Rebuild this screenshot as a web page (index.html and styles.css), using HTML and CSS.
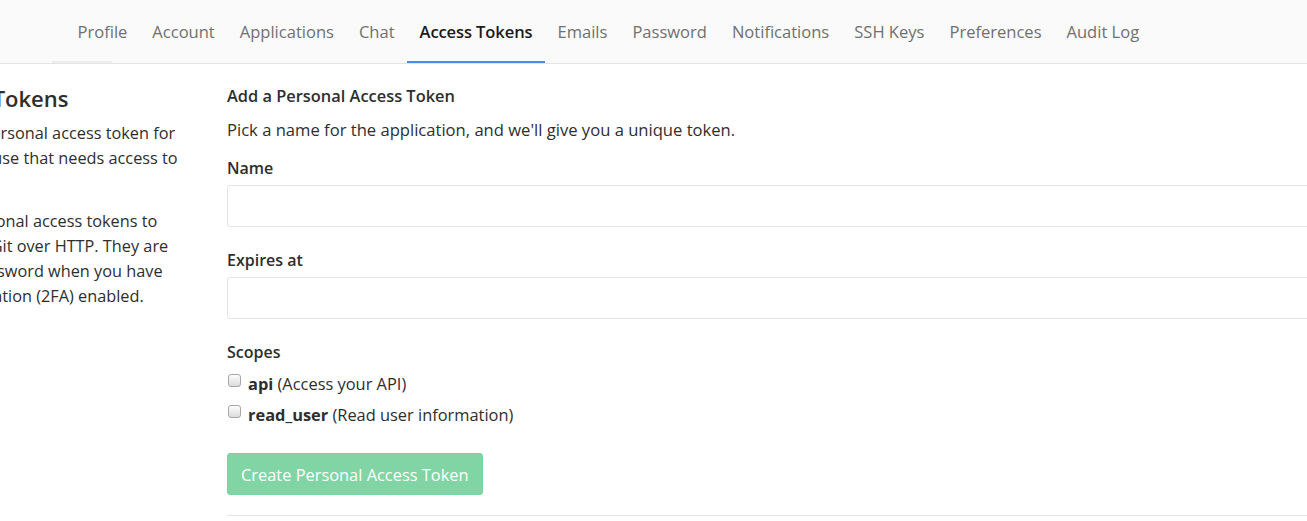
FILE: index.html
```html
<!DOCTYPE html>
<html>
<head>
<meta charset="utf-8">
<link rel="stylesheet" href="styles.css">
</head>
<body>
<nav class="nav">
  <a class="tab tab-first">Profile</a>
  <a class="tab">Account</a>
  <a class="tab">Applications</a>
  <a class="tab">Chat</a>
  <a class="tab active">Access Tokens</a>
  <a class="tab">Emails</a>
  <a class="tab">Password</a>
  <a class="tab">Notifications</a>
  <a class="tab">SSH Keys</a>
  <a class="tab">Preferences</a>
  <a class="tab">Audit Log</a>
</nav>
<div class="content">
  <aside class="sidebar">
    <h4 class="side-title">Personal Access Tokens</h4>
    <p class="side-text">You can generate a personal access token for<br>each application you use that needs access to<br>the GitLab API.</p>
    <p class="side-text">You can also use personal access tokens to<br>authenticate against Git over HTTP. They are<br>the only accepted password when you have<br>Two-Factor Authentication (2FA) enabled.</p>
  </aside>
  <main class="main">
    <h4 class="form-title">Add a Personal Access Token</h4>
    <p class="form-desc">Pick a name for the application, and we'll give you a unique token.</p>
    <label class="label">Name</label>
    <div class="input"></div>
    <label class="label label-gap">Expires at</label>
    <div class="input"></div>
    <label class="label label-gap">Scopes</label>
    <div class="scope scope-first"><span class="check"></span><b>api</b>&nbsp;(Access your API)</div>
    <div class="scope"><span class="check"></span><b>read_user</b>&nbsp;(Read user information)</div>
    <button class="btn">Create Personal Access Token</button>
    <hr class="rule">
  </main>
</div>
</body>
</html>
```
FILE: styles.css
```css
html, body {
  margin: 0;
  padding: 0;
  overflow: hidden;
  background: #fff;
}
body {
  font-family: "Segoe UI", "Open Sans", "Noto Sans", sans-serif;
  font-size: 16.5px;
  color: #2e2e2e;
  width: 1307px;
  height: 521px;
}
.nav {
  display: flex;
  height: 63px;
  background: #fafafa;
  border-bottom: 1px solid #e5e5e5;
  padding-left: 65px;
  box-sizing: content-box;
}
.tab {
  display: block;
  padding: 0 12.5px;
  line-height: 63px;
  font-size: 16.55px;
  color: #707070;
  position: relative;
}
.tab-first::after {
  content: "";
  position: absolute;
  left: -13px;
  width: 60px;
  bottom: 0;
  height: 2px;
  background: #ececec;
}
.tab.active {
  color: #1a1a1a;
  font-weight: 600;
  letter-spacing: -0.1px;
}
.tab.active::after {
  content: "";
  position: absolute;
  left: 0;
  right: 0;
  bottom: 0;
  height: 2px;
  background: #4a8bee;
}
.content {
  display: flex;
}
.sidebar {
  flex: 0 0 395px;
  margin-left: -168px;
  white-space: nowrap;
}
.side-title {
  margin: 19px 0 0 -14px;
  font-size: 22px;
  line-height: 30px;
  font-weight: 600;
}
.side-text {
  margin: 8px 0 0;
  font-size: 16.3px;
  line-height: 25px;
}
.side-text + .side-text {
  margin-top: 13px;
}
.main {
  flex: 0 0 1200px;
  padding-top: 20px;
}
.form-title {
  margin: 0;
  font-size: 16.4px;
  line-height: 24px;
  font-weight: 600;
}
.form-desc {
  margin: 10px 0 0;
  font-size: 16.6px;
  line-height: 24px;
}
.label {
  display: block;
  margin-top: 14px;
  font-size: 16px;
  line-height: 24px;
  font-weight: 600;
}
.label-gap {
  margin-top: 21px;
}
.input {
  margin-top: 5px;
  height: 42px;
  box-sizing: border-box;
  border: 1px solid #e5e5e5;
  border-radius: 3px;
  background: #fff;
}
.scope {
  display: flex;
  align-items: center;
  margin-top: 7px;
  font-size: 16.4px;
  line-height: 24px;
}
.scope-first {
  margin-top: 8px;
}
.scope b {
  font-weight: 700;
}
.check {
  flex: 0 0 auto;
  width: 11px;
  height: 11px;
  border: 1px solid #a6a6a6;
  border-radius: 3px;
  background: linear-gradient(#fdfdfd, #dcdcdc);
  margin: 0 7px 0 1px;
  position: relative;
  top: -4px;
}
.btn {
  display: block;
  margin-top: 26px;
  height: 42px;
  padding: 0 13px;
  border: 1px solid #7dd2a0;
  border-radius: 3px;
  background: #81d4a3;
  color: #fff;
  font-family: inherit;
  font-size: 16.4px;
}
.rule {
  margin: 20px 0 0;
  border: 0;
  border-top: 1px solid #e5e5e5;
}
```
